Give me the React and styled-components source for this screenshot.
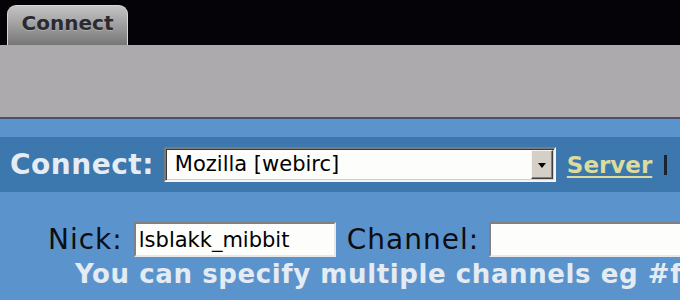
import React from "react";
import styled, { createGlobalStyle } from "styled-components";

const GlobalStyle = createGlobalStyle`
  html, body {
    margin: 0;
    padding: 0;
    overflow: hidden;
    background: #5b94cc;
  }
  body {
    font-family: "DejaVu Sans", Verdana, sans-serif;
  }
`;

const TabBar = styled.div`
  display: flex;
  align-items: flex-end;
  height: 45px;
  padding-left: 7px;
  background: #050308;
`;

const Tab = styled.div`
  width: 121px;
  height: 40px;
  box-sizing: border-box;
  border: 1px solid #d6d6d6;
  border-bottom: none;
  border-radius: 9px 9px 0 0;
  background: linear-gradient(#c4c4c4, #a2a2a2 45%, #767676);
  display: flex;
  justify-content: center;
  padding-top: 5px;
  font-weight: bold;
  font-size: 20px;
  color: #2a2a30;
  text-shadow: 0 1px 0 rgba(255, 255, 255, 0.25);
`;

const GrayPanel = styled.div`
  height: 72px;
  background: #adaaae;
  border-bottom: 2px solid #4b4f6a;
`;

const Page = styled.div`
  padding-top: 18px;
  width: 900px;
`;

const ConnectBand = styled.div`
  display: flex;
  align-items: center;
  height: 55px;
  padding-left: 10px;
  background: #3c77ae;
`;

const BandLabel = styled.span`
  font-weight: bold;
  font-size: 28px;
  letter-spacing: 0.5px;
  color: #e6ecf3;
  margin-right: 10px;
`;

const Select = styled.div`
  display: flex;
  align-items: stretch;
  width: 392px;
  height: 35px;
  box-sizing: border-box;
  background: #fdfefc;
  border-style: solid;
  border-width: 2px;
  border-color: #7b7b7b #f4f4f4 #f4f4f4 #7b7b7b;
  box-shadow: inset 1px 1px 0 #3a3a3a, inset -1px -1px 0 #d4d0c8;
`;

const SelectValue = styled.span`
  flex: 1;
  padding-left: 9px;
  font-size: 21px;
  line-height: 31px;
  color: #000;
  white-space: nowrap;
`;

const DropButton = styled.span`
  width: 22px;
  margin: 1px 1px 1px 0;
  box-sizing: border-box;
  display: flex;
  align-items: center;
  justify-content: center;
  background: #d4d0c8;
  border-style: solid;
  border-width: 1px;
  border-color: #f4f4f4 #404040 #404040 #f4f4f4;
  box-shadow: inset -1px -1px 0 #808080;
`;

const Arrow = styled.span`
  width: 0;
  height: 0;
  border-left: 4px solid transparent;
  border-right: 4px solid transparent;
  border-top: 5px solid #000;
  margin-top: 1px;
`;

const ServerLink = styled.a`
  margin-left: 11px;
  font-weight: bold;
  font-size: 23px;
  color: #dcdc9c;
  text-decoration: underline;
  text-underline-offset: 3px;
  text-decoration-thickness: 2px;
`;

const Divider = styled.span`
  margin-left: 12px;
  width: 3px;
  height: 20px;
  background: #1a2234;
`;

const FieldRow = styled.div`
  display: flex;
  align-items: center;
  margin-top: 30px;
  padding-left: 48px;
`;

const FieldLabel = styled.label`
  font-size: 28px;
  letter-spacing: 1px;
  color: #0e0e12;
  margin-right: ${(props) => props.gap}px;
`;

const TextInput = styled.input`
  width: ${(props) => props.w}px;
  height: 35px;
  box-sizing: border-box;
  margin: 0 11px 0 0;
  padding: 0 0 0 3px;
  font-family: "DejaVu Sans", Verdana, sans-serif;
  font-size: 21px;
  color: #000;
  background: #fdfefc;
  border-style: solid;
  border-width: 2px;
  border-color: #808080 #e8e8e8 #e8e8e8 #808080;
  outline: none;
`;

const Hint = styled.div`
  margin-top: 2px;
  padding-left: 75px;
  font-weight: bold;
  font-size: 26px;
  letter-spacing: 0.6px;
  line-height: 30px;
  color: #e4ebf3;
  white-space: nowrap;
`;

const App = () => (
  <>
    <GlobalStyle />
    <TabBar>
      <Tab>Connect</Tab>
    </TabBar>
    <GrayPanel />
    <Page>
      <ConnectBand>
        <BandLabel>Connect:</BandLabel>
        <Select>
          <SelectValue>Mozilla [webirc]</SelectValue>
          <DropButton>
            <Arrow />
          </DropButton>
        </Select>
        <ServerLink href="#">Server</ServerLink>
        <Divider />
      </ConnectBand>
      <FieldRow>
        <FieldLabel gap={11}>Nick:</FieldLabel>
        <TextInput w={202} defaultValue="lsblakk_mibbit" />
        <FieldLabel gap={10}>Channel:</FieldLabel>
        <TextInput w={260} defaultValue="" />
      </FieldRow>
      <Hint>You can specify multiple channels eg #foo,#bar</Hint>
    </Page>
  </>
);

export default App;
